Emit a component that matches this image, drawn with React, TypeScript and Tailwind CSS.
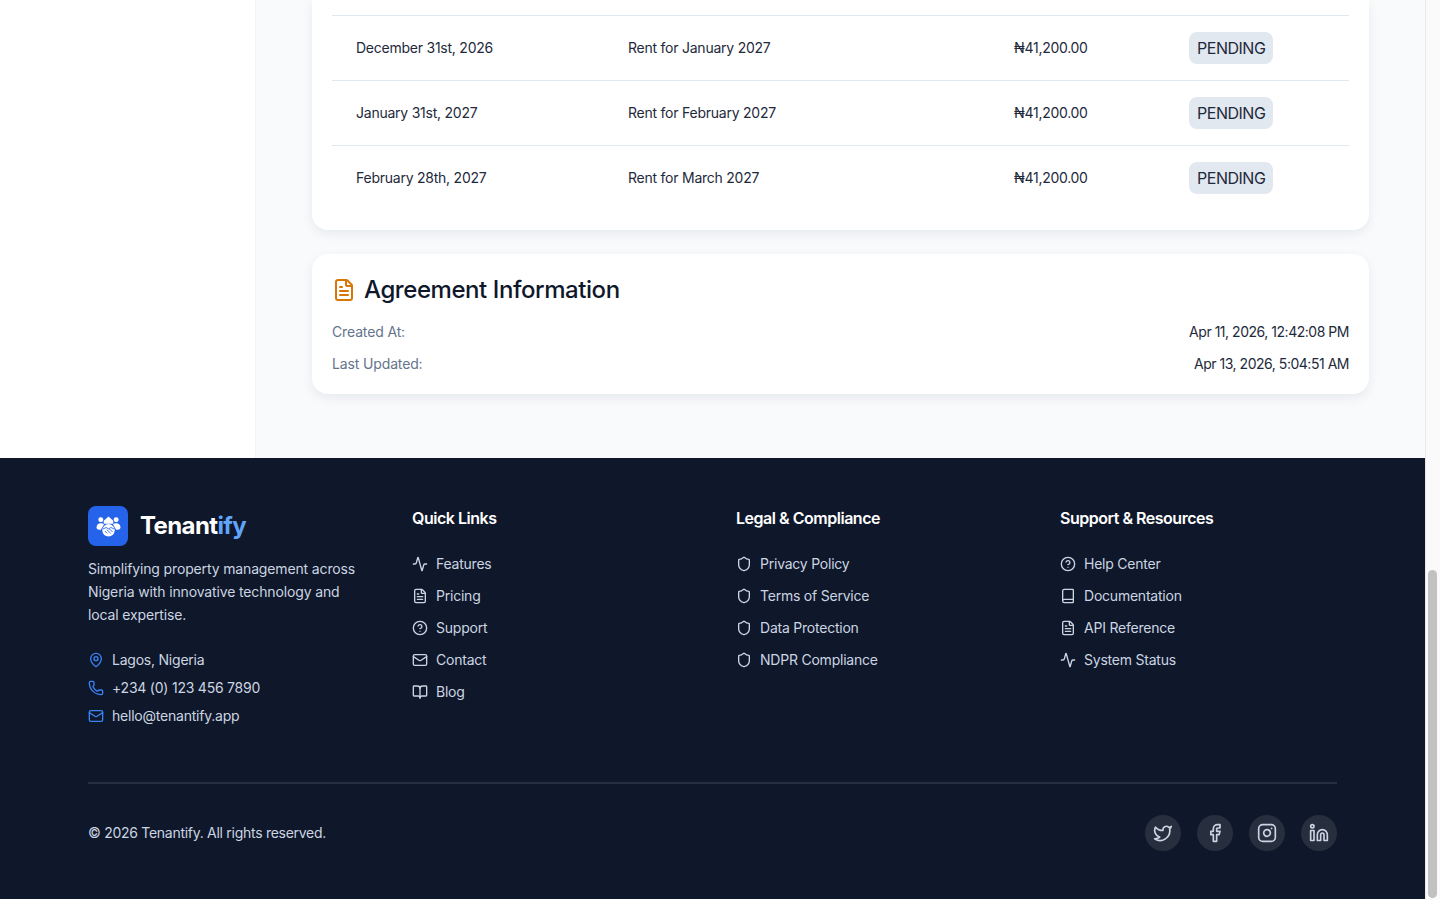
import React from 'react';
import {
  Activity,
  Book,
  BookOpen,
  CircleHelp,
  Facebook,
  FileText,
  Instagram,
  Linkedin,
  Mail,
  MapPin,
  Phone,
  Shield,
  Twitter,
} from 'lucide-react';

const payments = [
  { date: 'December 31st, 2026', label: 'Rent for January 2027' },
  { date: 'January 31st, 2027', label: 'Rent for February 2027' },
  { date: 'February 28th, 2027', label: 'Rent for March 2027' },
];

const columns = [
  {
    title: 'Quick Links',
    links: [
      { icon: Activity, label: 'Features' },
      { icon: FileText, label: 'Pricing' },
      { icon: CircleHelp, label: 'Support' },
      { icon: Mail, label: 'Contact' },
      { icon: BookOpen, label: 'Blog' },
    ],
  },
  {
    title: 'Legal & Compliance',
    links: [
      { icon: Shield, label: 'Privacy Policy' },
      { icon: Shield, label: 'Terms of Service' },
      { icon: Shield, label: 'Data Protection' },
      { icon: Shield, label: 'NDPR Compliance' },
    ],
  },
  {
    title: 'Support & Resources',
    links: [
      { icon: CircleHelp, label: 'Help Center' },
      { icon: Book, label: 'Documentation' },
      { icon: FileText, label: 'API Reference' },
      { icon: Activity, label: 'System Status' },
    ],
  },
];

const contacts = [
  { icon: MapPin, label: 'Lagos, Nigeria' },
  { icon: Phone, label: '+234 (0) 123 456 7890' },
  { icon: Mail, label: 'hello@tenantify.app' },
];

const socials = [Twitter, Facebook, Instagram, Linkedin];

const Logo = () => (
  <div className="w-10 h-10 rounded-lg bg-[#2563eb] flex items-center justify-center">
    <svg viewBox="0 0 28 24" className="w-[27px] h-[23px]" fill="#fff">
      <circle cx="6" cy="5" r="2.6" />
      <circle cx="22" cy="5" r="2.6" />
      <path d="M14 1.5l5 4.5v3h-10v-3z" />
      <path d="M1.5 13c0-3 2-4.500 4.500-4.500 1.500 0 2.500.5 3.300 1.300L6 15.500c-2 0-4.500-.5-4.500-2.500z" />
      <path d="M26.500 13c0-3-2-4.500-4.500-4.500-1.500 0-2.500.5-3.300 1.300L22 15.500c2 0 4.500-.5 4.500-2.500z" />
      <circle cx="14" cy="16" r="6.500" />
      <g stroke="#2563eb" strokeWidth="0.9" fill="none" strokeLinecap="round">
        <path d="M8.500 14.500l3-1.500 2.500 1.500 2.500-1.500 3 1.500" />
        <path d="M10.500 17l2 2M12.500 15.500l3.500 3.500M15 14.500l3 3" />
      </g>
    </svg>
  </div>
);

export default function App() {
  return (
    <div className="flex h-screen overflow-hidden bg-white font-['Inter',sans-serif] tracking-[-0.014em]">
      <div className="flex-1 flex flex-col min-w-0">
        <div className="flex h-[458px] shrink-0">
          <aside className="w-[256px] shrink-0 bg-white border-r border-[#f1f5f9]" />
          <main className="flex-1 min-w-0 bg-[#f8fafc] px-14">
            <section className="bg-white rounded-b-2xl shadow-[0_4px_12px_rgba(15,23,42,0.07)] px-5 pb-5 pt-[15px]">
              {payments.map((row) => (
                <div
                  key={row.date}
                  className="grid grid-cols-[272px_386px_175px_1fr] items-center h-[65px] border-t border-[#e2e8f0] text-sm text-[#1e293b]"
                >
                  <div className="px-6 tracking-[-0.017em]">{row.date}</div>
                  <div className="px-6 tracking-[-0.017em]">{row.label}</div>
                  <div className="px-6 tracking-[-0.02em]">₦41,200.00</div>
                  <div className="px-6">
                    <span className="inline-flex items-center h-8 px-2 rounded-lg bg-[#e2e8f0] text-base tracking-[-0.03em] text-[#1e293b]">
                      PENDING
                    </span>
                  </div>
                </div>
              ))}
            </section>
            <section className="mt-6 bg-white rounded-2xl shadow-[0_4px_12px_rgba(15,23,42,0.07)] p-5">
              <div className="flex items-center gap-2 h-8 mb-4">
                <FileText className="w-6 h-6 text-[#d97706]" />
                <h2 className="text-2xl font-medium tracking-[-0.018em] text-[#0f172a]">Agreement Information</h2>
              </div>
              <div className="flex flex-col gap-3 text-sm">
                <div className="flex justify-between">
                  <span className="text-[#64748b] tracking-[-0.01em]">Created At:</span>
                  <span className="text-[#1e293b] tracking-[-0.034em]">Apr 11, 2026, 12:42:08 PM</span>
                </div>
                <div className="flex justify-between">
                  <span className="text-[#64748b] tracking-[-0.01em]">Last Updated:</span>
                  <span className="text-[#1e293b] tracking-[-0.034em]">Apr 13, 2026, 5:04:51 AM</span>
                </div>
              </div>
            </section>
          </main>
        </div>
        <footer className="h-[441px] shrink-0 bg-[#0f172a] px-[88px] pt-12">
          <div className="grid grid-cols-[276px_276px_276px_276px] gap-12 h-[276px]">
            <div>
              <div className="flex items-center gap-3 mb-[11px]">
                <Logo />
                <span className="text-2xl font-bold tracking-[-0.025em] text-white">
                  Tenant<span className="text-[#60a5fa]">ify</span>
                </span>
              </div>
              <p className="text-sm leading-[23px] tracking-[-0.01em] text-[#cbd5e1] mb-6">
                Simplifying property management across Nigeria with innovative technology and local expertise.
              </p>
              <ul className="flex flex-col gap-2">
                {contacts.map(({ icon: Icon, label }) => (
                  <li key={label} className="flex items-center gap-2 h-5 text-sm text-[#cbd5e1]">
                    <Icon className="w-4 h-4 text-[#3b82f6]" />
                    {label}
                  </li>
                ))}
              </ul>
            </div>
            {columns.map((col) => (
              <div key={col.title}>
                <h3 className="h-6 mb-6 text-base font-semibold tracking-[-0.03em] text-white">{col.title}</h3>
                <ul className="flex flex-col gap-3">
                  {col.links.map(({ icon: Icon, label }) => (
                    <li key={label} className="flex items-center gap-2 h-5 text-sm text-[#cbd5e1]">
                      <Icon className="w-4 h-4" />
                      {label}
                    </li>
                  ))}
                </ul>
              </div>
            ))}
          </div>
          <div className="border-t-2 border-[#262f40] pt-[31px] flex items-center justify-between">
            <span className="text-sm tracking-[-0.02em] text-[#cbd5e1]">© 2026 Tenantify. All rights reserved.</span>
            <div className="flex gap-4">
              {socials.map((Icon, i) => (
                <div key={i} className="w-9 h-9 rounded-full bg-[#272f3f] flex items-center justify-center">
                  <Icon className="w-5 h-5 text-[#cbd5e1]" />
                </div>
              ))}
            </div>
          </div>
        </footer>
      </div>
      <div className="w-[15px] shrink-0 bg-[#fafafa] border-l border-[#e8e8e8] pl-[2px] pr-[3px] pt-[570px]">
        <div className="h-[328px] rounded-full bg-[#c1c1c1]" />
      </div>
    </div>
  );
}
